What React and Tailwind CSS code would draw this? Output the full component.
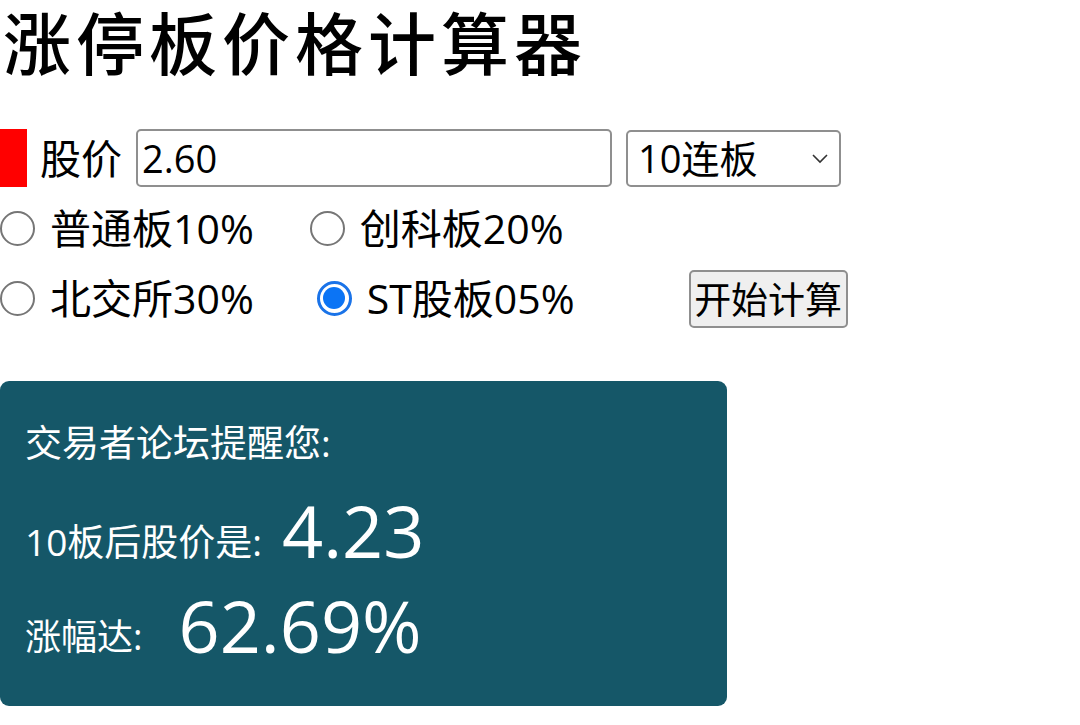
import { useState } from 'react';

const font = { fontFamily: '"Open Sans", "Noto Sans CJK SC", sans-serif' };

function Radio({ checked, label, onChange }) {
  return (
    <label className="flex items-center cursor-pointer">
      {checked ? (
        <span className="w-[35px] h-[35px] rounded-full border-[3px] border-[#1a73e8] bg-white flex items-center justify-center">
          <span className="w-[22px] h-[22px] rounded-full bg-[#0b74f5]" />
        </span>
      ) : (
        <span className="w-[35px] h-[35px] rounded-full border-2 border-[#767676] bg-white" />
      )}
      <input type="radio" className="hidden" checked={checked} onChange={onChange} />
      <span className="ml-[15px] text-[41px] leading-none text-black">{label}</span>
    </label>
  );
}

export default function App() {
  const [board, setBoard] = useState('st');

  return (
    <div className="w-[1080px] h-[725px] bg-white overflow-hidden" style={font}>
      <h1 className="pt-[4px] pl-[3px] text-[68px] leading-[80px] font-medium text-black tracking-[5px] whitespace-nowrap">
        涨停板价格计算器
      </h1>

      <div className="mt-[44px] flex items-center h-[60px]">
        <div className="w-[27px] h-[58px] bg-[#ff0000]" />
        <span className="ml-[13px] text-[41px] leading-none">股价</span>
        <div className="ml-[14px] w-[476px] h-[58px] border-2 border-[#8f8f8f] rounded-[5px] flex items-center px-[4px]">
          <span className="text-[38px] leading-none">2.60</span>
        </div>
        <div className="ml-[14px] w-[215px] h-[57px] border-2 border-[#8f8f8f] rounded-[5px] flex items-center justify-between pl-[10px] pr-[10px]">
          <span className="text-[38px] leading-none">10连板</span>
          <svg width="18" height="12" viewBox="0 0 18 12" fill="none" stroke="#333" strokeWidth="1.6">
            <path d="M2 3l7 7 7-7" />
          </svg>
        </div>
      </div>

      <div className="mt-[10px] flex items-center h-[60px]">
        <Radio checked={board === 'main'} label="普通板10%" onChange={() => setBoard('main')} />
        <div className="ml-[56px]">
          <Radio checked={board === 'cy'} label="创科板20%" onChange={() => setBoard('cy')} />
        </div>
      </div>

      <div className="mt-[10px] flex items-center h-[60px]">
        <Radio checked={board === 'bj'} label="北交所30%" onChange={() => setBoard('bj')} />
        <div className="ml-[63px]">
          <Radio checked={board === 'st'} label="ST股板05%" onChange={() => setBoard('st')} />
        </div>
        <button className="ml-[114px] mt-[2px] w-[159px] h-[58px] border-2 border-[#8f8f8f] rounded-[5px] bg-[#efefef] text-[37px] leading-none">
          开始计算
        </button>
      </div>

      <div className="mt-[53px] w-[727px] h-[325px] bg-[#155768] rounded-[9px] text-white pl-[25px] pt-[43px]">
        <p className="text-[37px] leading-none">交易者论坛提醒您:</p>
        <div className="mt-[33px] flex items-end">
          <span className="text-[37px] leading-none mb-[6px]">10板后股价是:</span>
          <span className="ml-[20px] text-[72px] leading-none">4.23</span>
        </div>
        <div className="mt-[23px] flex items-end">
          <span className="text-[36px] leading-none mb-[6px]">涨幅达:</span>
          <span className="ml-[36px] text-[72px] leading-none">62.69%</span>
        </div>
      </div>
    </div>
  );
}
